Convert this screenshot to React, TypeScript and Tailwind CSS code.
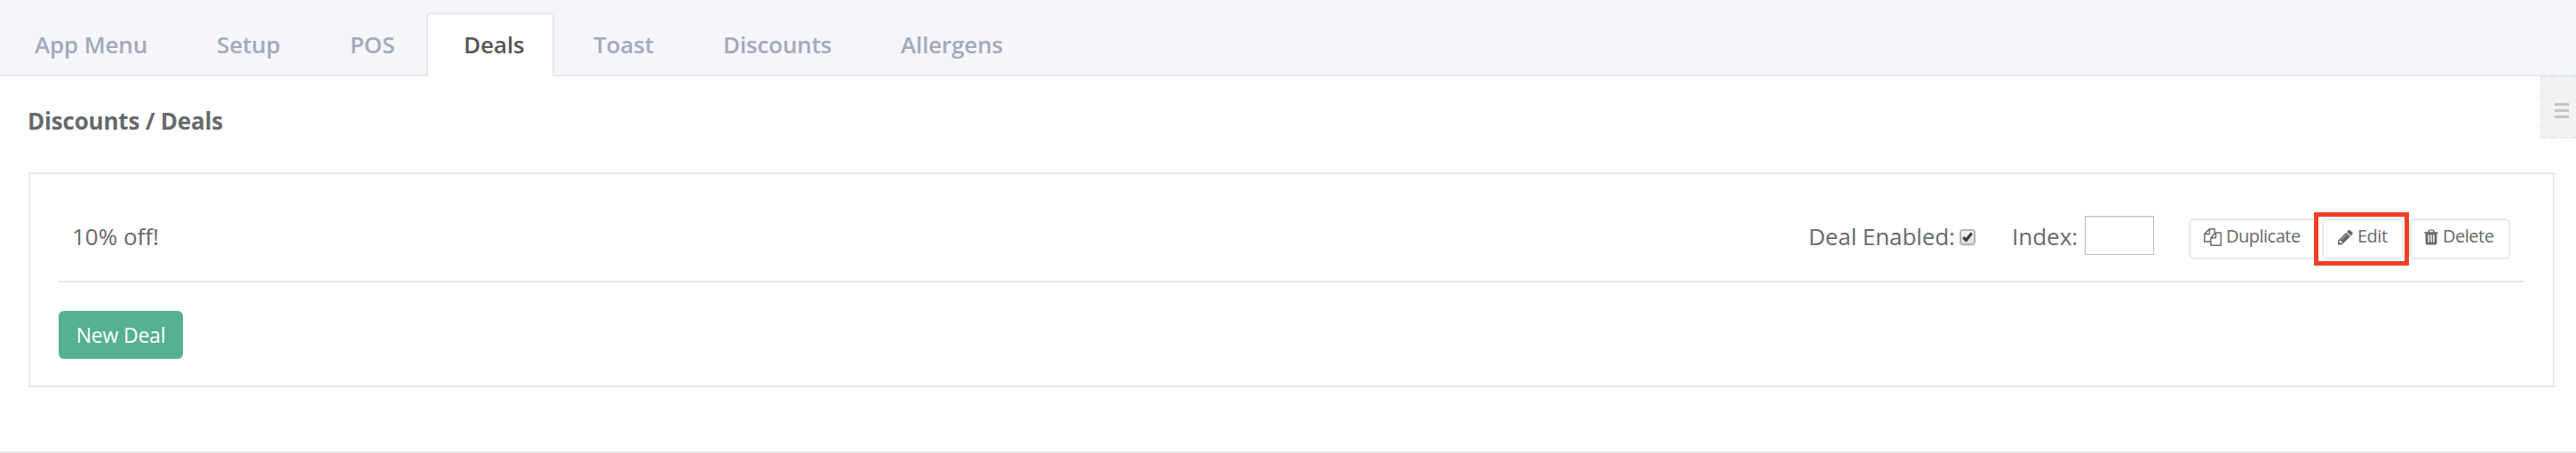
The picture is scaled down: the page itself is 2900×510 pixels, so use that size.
import type { ReactNode } from 'react';

const tabs = [
  { label: 'App Menu', className: '-ml-px w-[205px]' },
  { label: 'Setup', className: 'w-[150px]' },
  { label: 'POS', className: 'w-[126px]' },
  { label: 'Deals', className: 'w-[144px]', active: true },
  { label: 'Toast', className: 'ml-1 w-[146px]' },
  { label: 'Discounts', className: 'w-[200px]' },
  { label: 'Allergens', className: 'w-[194px]' },
];

const CopyIcon = () => (
  <svg className="mt-[6px] h-5 w-5 shrink-0" viewBox="0 0 1792 1792" fill="currentColor">
    <path d="M1696 384q40 0 68 28t28 68v1216q0 40-28 68t-68 28h-960q-40 0-68-28t-28-68v-288h-544q-40 0-68-28t-28-68v-672q0-40 20-88t48-76l408-408q28-28 76-48t88-20h416q40 0 68 28t28 68v328q68-40 128-40h416zm-544 213l-299 299h299v-299zm-640-384l-299 299h299v-299zm196 647l316-316v-416h-384v416q0 40-28 68t-68 28h-416v640h512v-256q0-40 20-88t48-76zm956 804v-1152h-384v416q0 40-28 68t-68 28h-416v640h896z" />
  </svg>
);

const PencilIcon = () => (
  <svg className="mt-[6px] h-5 w-[17px] shrink-0" viewBox="128 0 1536 1792" fill="currentColor">
    <path d="M491 1536l91-91-235-235-91 91v107h128v128h107zm523-928q0-22-22-22-10 0-17 7l-542 542q-7 7-7 17 0 22 22 22 10 0 17-7l542-542q7-7 7-17zm-54-192l416 416-832 832h-416v-416zm683 96q0 53-37 90l-166 166-416-416 166-165q36-38 90-38 53 0 91 38l235 234q37 39 37 91z" />
  </svg>
);

const TrashIcon = () => (
  <svg className="mt-[6px] h-5 w-4 shrink-0" viewBox="192 0 1408 1792" fill="currentColor">
    <path d="M704 1376v-704q0-14-9-23t-23-9h-64q-14 0-23 9t-9 23v704q0 14 9 23t23 9h64q14 0 23-9t9-23zm256 0v-704q0-14-9-23t-23-9h-64q-14 0-23 9t-9 23v704q0 14 9 23t23 9h64q14 0 23-9t9-23zm256 0v-704q0-14-9-23t-23-9h-64q-14 0-23 9t-9 23v704q0 14 9 23t23 9h64q14 0 23-9t9-23zm-544-992h448l-48-117q-7-9-17-11h-317q-10 2-17 11zm928 32v64q0 14-9 23t-23 9h-96v948q0 83-47 143.500t-113 60.500h-832q-66 0-113-58.500t-47-141.500v-952h-96q-14 0-23-9t-9-23v-64q0-14 9-23t23-9h309l70-167q15-37 54-63t79-26h320q40 0 79 26t54 63l70 167h309q14 0 23 9t9 23z" />
  </svg>
);

const ActionButton = ({ className, children }: { className: string; children: ReactNode }) => (
  <button className={`flex h-[46px] items-start gap-[5px] rounded-[6px] border-2 border-[#e7eaec] bg-white pt-[3px] text-[20px] leading-[30px] tracking-[-0.5px] ${className}`}>
    {children}
  </button>
);

export default function App() {
  return (
    <div className="flex h-[510px] w-full flex-col border-b-2 border-[#e7eaec] bg-white font-['Open_Sans',sans-serif] text-[26px] leading-9 text-[#676a6c]">
      {/* Tabs */}
      <nav className="flex h-[86px] shrink-0 items-stretch border-b-2 border-[#e7eaec] bg-[#f4f6fa] pt-[14px]">
        {tabs.map((tab) => (
          <a
            key={tab.label}
            className={`${tab.className} shrink-0 font-semibold tracking-[-0.15px] whitespace-nowrap ${
              tab.active
                ? '-mb-[2px] rounded-t-[6px] border-2 border-b-0 border-[#e7eaec] bg-white pt-4 pl-10 text-[#555555]'
                : 'pt-[18px] pl-10 text-[#a2a9bc]'
            }`}
          >
            {tab.label}
          </a>
        ))}
      </nav>

      <div className="flex justify-between">
        <h1 className="pt-8 pl-[31px] font-bold tracking-[-0.2px]">Discounts / Deals</h1>
        {/* Drawer handle */}
        <button className="flex h-[70px] w-10 flex-col items-start gap-1 border-2 border-r-0 border-dashed border-[#e7eaec] bg-[#f2f2f2] pt-7 pl-[14px]">
          <span className="h-[3px] w-4 bg-[#c4c4c4]" />
          <span className="h-[3px] w-4 bg-[#c4c4c4]" />
          <span className="h-[3px] w-4 bg-[#c4c4c4]" />
        </button>
      </div>

      <section className="mt-[38px] mr-6 ml-8 h-[242px] border-2 border-[#e7eaec] px-8 pt-[43px]">
        <div className="flex h-[79px] items-start border-b-2 border-[#e7eaec] pr-4 pl-[15px]">
          <span className="mr-auto pt-[9px]">10% off!</span>
          <label className="flex items-start pt-[9px] whitespace-nowrap">
            <span className="w-[170px] tracking-[-0.08px]">Deal Enabled:</span>
            <span className="mt-[10px] flex h-[18px] w-[18px] items-center justify-center rounded-[4px] border-2 border-[#b4b4b4] bg-linear-to-b from-[#f4f4f4] to-[#dedede] shadow-[0_1px_1px_#e4e4e4]">
              <svg className="h-3 w-3" viewBox="0 0 12 12" fill="none" stroke="#3f3f3f" strokeWidth="3.2">
                <path d="M1.200 6.300L4.500 9.300L10.700 1.500" />
              </svg>
            </span>
          </label>
          <label className="ml-[41px] flex items-start">
            <span className="w-[82px] pt-[9px]">Index:</span>
            <input className="mt-1 h-11 w-[78px] border border-[#bcbcbc] bg-white shadow-[inset_0_1px_1px_#e8e8e8]" />
          </label>
          <div className="relative ml-[39px] flex w-[362px] items-start pt-[7px]">
            <ActionButton className="w-[146px] pl-[15px]">
              <CopyIcon />
              Duplicate
            </ActionButton>
            <ActionButton className="ml-1 w-[92px] pl-4">
              <PencilIcon />
              Edit
            </ActionButton>
            <ActionButton className="ml-[6px] w-[114px] pl-[15px]">
              <TrashIcon />
              Delete
            </ActionButton>
            {/* Highlight around the edit action */}
            <div className="pointer-events-none absolute top-0 left-[141px] h-[60px] w-[107px] border-[5px] border-[#ee4026]" />
          </div>
        </div>
        <button className="mt-8 h-[54px] w-[140px] rounded-[6px] bg-[#55b094] text-[23px] leading-9 tracking-[-0.2px] text-white">
          New Deal
        </button>
      </section>
    </div>
  );
}
